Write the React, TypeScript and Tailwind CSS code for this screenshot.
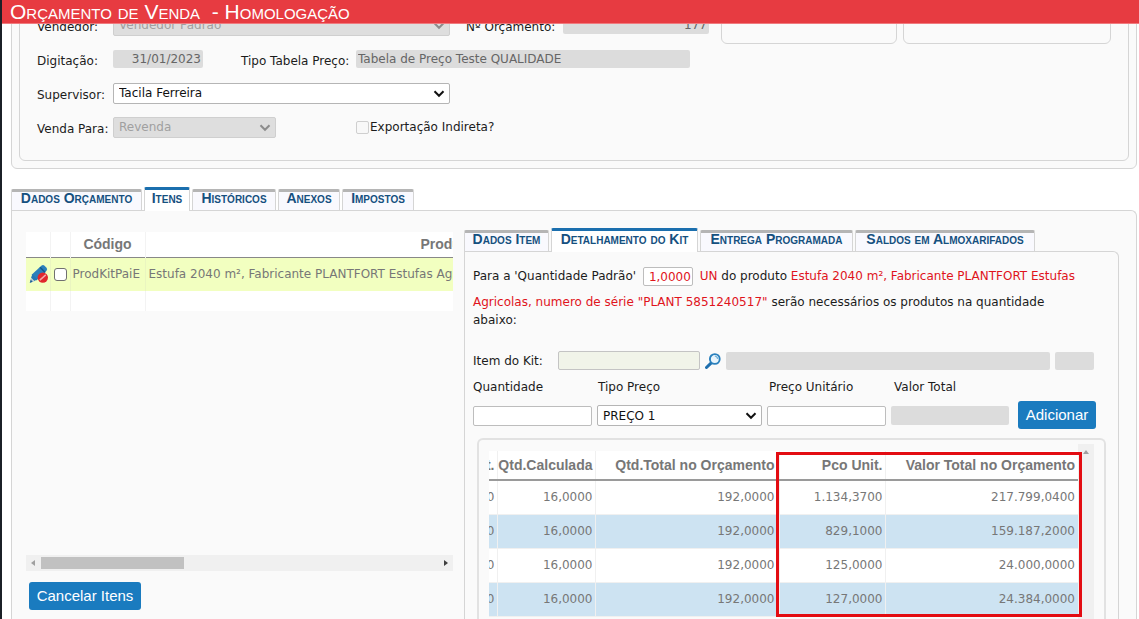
import type { ReactNode } from 'react';
import clsx from 'clsx';

interface Tab {
  label: string;
  width: string;
  active?: boolean;
}

const mainTabs: Tab[] = [
  { label: 'Dados Orçamento', width: 'w-[131px]' },
  { label: 'Itens', width: 'w-[46px]', active: true },
  { label: 'Históricos', width: 'w-[84px]' },
  { label: 'Anexos', width: 'w-[62px]' },
  { label: 'Impostos', width: 'w-[72px]' },
];

const itemTabs: Tab[] = [
  { label: 'Dados Item', width: 'w-[85px]' },
  { label: 'Detalhamento do Kit', width: 'w-[147px]', active: true },
  { label: 'Entrega Programada', width: 'w-[153px]' },
  { label: 'Saldos em Almoxarifados', width: 'w-[180px]' },
];

const kitRows = [
  { unit: '0', calc: '16,0000', total: '192,0000', price: '1.134,3700', value: '217.799,0400' },
  { unit: '0', calc: '16,0000', total: '192,0000', price: '829,1000', value: '159.187,2000' },
  { unit: '0', calc: '16,0000', total: '192,0000', price: '125,0000', value: '24.000,0000' },
  { unit: '0', calc: '16,0000', total: '192,0000', price: '127,0000', value: '24.384,0000' },
];

const field = 'block rounded-xs border border-[#bdbdbd] bg-white px-[5px] outline-none';
const readOnlyField = 'block rounded-xs bg-[#dcdcdc] px-[2px] text-[#666] outline-none';

function Tabs({ tabs }: { tabs: Tab[] }) {
  return (
    <div role="tablist" className="relative z-10 -mb-px flex items-end gap-[2px]">
      {tabs.map((tab) => (
        <button
          key={tab.label}
          type="button"
          role="tab"
          aria-selected={!!tab.active}
          className={clsx(
            "flex shrink-0 justify-center rounded-t-xs border-x border-t-[3px] font-['Liberation_Sans'] text-[14px] font-bold whitespace-nowrap text-[#15507f] [font-variant:small-caps]",
            tab.width,
            tab.active
              ? 'h-6 border-x-[#d5d5d5] border-t-[#1b6fae] bg-white leading-[16px]'
              : 'h-[22px] border-b border-x-[#d5d5d5] border-t-[#b5b5b5] border-b-[#d5d5d5] bg-[#f9f9fe] leading-[13px]'
          )}
        >
          {tab.label}
        </button>
      ))}
    </div>
  );
}

interface SelectProps {
  id: string;
  value: string;
  width: string;
  disabled?: boolean;
}

function Select({ id, value, width, disabled }: SelectProps) {
  return (
    <div className={clsx('relative', width)}>
      <select
        id={id}
        disabled={disabled}
        className={clsx(
          'block h-[21px] w-full appearance-none rounded-xs border px-[5px] opacity-100 outline-none',
          disabled ? 'border-[#cfcfcf] bg-[#dedede] text-[#a0a0a0]' : 'border-[#b5b5b5] bg-white text-[#111]'
        )}
      >
        <option>{value}</option>
      </select>
      <svg viewBox="0 0 12 8" className="pointer-events-none absolute top-[7px] right-[5px] h-2 w-3">
        <path d="M1.5 1.3 6 5.8l4.5-4.5" fill="none" stroke={disabled ? '#8c8c8c' : '#111'} strokeWidth="2" />
      </svg>
    </div>
  );
}

function Label({ id, width, children }: { id: string; width?: string; children: ReactNode }) {
  return (
    <label htmlFor={id} className={clsx('shrink-0 pt-[3px] whitespace-nowrap', width)}>
      {children}
    </label>
  );
}

function EditIcon() {
  return (
    <svg viewBox="0 0 20 20" className="h-5 w-5">
      <path d="M2.6 10.8 12.6 1.6q1.5-1.1 2.9.2l2 2q1.3 1.5 0 3L7.4 16.4z" fill="#2b7fbb" />
      <path d="m11 3.2 5.2 5.3" stroke="#12588e" strokeWidth="1.4" />
      <path d="m3.4 10.2 5 5.3-3.2 1.6-3.2-3.3z" fill="#2377b4" />
      <path d="m2 13.4 3.6 3.8-4.4 1.6z" fill="#b9c9d3" />
      <path d="m1.7 15.6 2 2.2-3 1.1z" fill="#1b6195" />
      <circle cx="13.8" cy="13.6" r="5.2" fill="#e0272c" />
      <path d="m10.8 16.1 6-5.2" stroke="#f3a9a6" strokeWidth="1.5" />
    </svg>
  );
}

function SearchIcon() {
  return (
    <svg viewBox="0 0 16 16" className="h-4 w-4">
      <path d="m1.5 14.5 5-4.8" stroke="#1f6fae" strokeWidth="3" strokeLinecap="round" />
      <circle cx="9.8" cy="6" r="4.9" fill="#eaf5fc" stroke="#2a80bd" strokeWidth="1.9" />
      <path d="M9.8 3.2a2.8 2.8 0 0 1 2.8 2.8" fill="none" stroke="#75b5dd" strokeWidth="1.3" />
    </svg>
  );
}

function ActionButton({ width, children }: { width: string; children: ReactNode }) {
  return (
    <button
      type="button"
      className={clsx(
        "h-7 shrink-0 rounded-[3px] bg-[#1a7bbf] font-['Liberation_Sans'] text-[15px] leading-6 whitespace-nowrap text-white",
        width
      )}
    >
      {children}
    </button>
  );
}

function BudgetForm() {
  return (
    <section className="rounded-md border border-[#d5d5d5] bg-[#fafafa] p-[7px]">
      <div className="flex justify-between rounded-md border border-[#d5d5d5] pr-[17px] pb-4 pl-[17px]">
        <div className="shrink-0">
          <div className="flex h-[34px] items-center">
            <Label id="vendedor" width="w-[76px]">Vendedor:</Label>
            <Select id="vendedor" value="Vendedor Padrão" width="w-[337px]" disabled />
            <Label id="numero" width="ml-4 w-[97px]">Nº Orçamento:</Label>
            <input id="numero" readOnly defaultValue="177" className={clsx(readOnlyField, 'h-[18px] w-[146px] text-right')} />
          </div>
          <div className="flex h-[34px] items-center">
            <Label id="digitacao" width="w-[76px]">Digitação:</Label>
            <input id="digitacao" readOnly defaultValue="31/01/2023" className={clsx(readOnlyField, 'h-[18px] w-[90px] text-right')} />
            <Label id="tabela" width="ml-[38px] w-[115px]">Tipo Tabela Preço:</Label>
            <input id="tabela" readOnly defaultValue="Tabela de Preço Teste QUALIDADE" className={clsx(readOnlyField, 'h-[18px] w-[334px]')} />
          </div>
          <div className="flex h-[34px] items-center">
            <Label id="supervisor" width="w-[76px]">Supervisor:</Label>
            <Select id="supervisor" value="Tacila Ferreira" width="w-[337px]" />
          </div>
          <div className="flex h-[34px] items-center">
            <Label id="venda" width="w-[76px]">Venda Para:</Label>
            <Select id="venda" value="Revenda" width="w-[163px]" disabled />
            <label className="ml-20 flex items-center gap-px">
              <input type="checkbox" disabled className="h-[13px] w-[13px] appearance-none rounded-xs border border-[#cfcfcf] bg-[#f8f8f8]" />
              Exportação Indireta?
            </label>
          </div>
        </div>
        <div className="flex h-9 gap-[6px]">
          <div className="w-44 rounded-b-md border border-[#d5d5d5]" />
          <div className="w-52 rounded-b-md border border-[#d5d5d5]" />
        </div>
      </div>
    </section>
  );
}

function ItemsGrid() {
  return (
    <div className="w-[427px] shrink-0 pt-[21px]">
      <div className="flex h-[339px] flex-col justify-between overflow-hidden">
        <div className="overflow-hidden">
          <table className="w-[723px] table-fixed border-collapse text-[#777]">
            <colgroup>
              <col className="w-6" />
              <col className="w-5" />
              <col className="w-[75px]" />
              <col />
            </colgroup>
            <thead>
              <tr className="h-[25px] border-b border-[#888] bg-white font-['Liberation_Sans'] text-[14px]">
                <th className="border-r border-r-[#f3f3f3]" />
                <th className="border-r border-r-[#f3f3f3]" />
                <th className="border-r border-r-[#f3f3f3]">Código</th>
                <th>Produto</th>
              </tr>
            </thead>
            <tbody>
              <tr className="h-[34px] bg-[#f2ffc0]">
                <td className="border-r border-r-[#eaf5c0] pl-[3px]">
                  <EditIcon />
                </td>
                <td className="border-r border-r-[#eaf5c0] pl-[3px]">
                  <input
                    type="checkbox"
                    aria-label="Selecionar ProdKitPaiE"
                    className="block h-[13px] w-[13px] appearance-none rounded-[3px] border border-[#707070] bg-white"
                  />
                </td>
                <td className="overflow-hidden border-r border-r-[#eaf5c0] pl-[2px] whitespace-nowrap">ProdKitPaiE</td>
                <td className="overflow-hidden pl-[3px] whitespace-nowrap">Estufa 2040 m², Fabricante PLANTFORT Estufas Agricolas</td>
              </tr>
              <tr className="h-5 bg-white">
                <td className="border-r border-[#f3f3f3]" />
                <td className="border-r border-[#f3f3f3]" />
                <td className="border-r border-[#f3f3f3]" />
                <td />
              </tr>
            </tbody>
          </table>
        </div>
        <div className="flex h-4 items-center bg-[#f0f0f0] px-[5px]">
          <svg viewBox="0 0 4 6" className="h-[6px] w-1">
            <path d="M4 0v6L0 3z" fill="#a0a0a0" />
          </svg>
          <div className="ml-[6px] h-3 w-[143px] bg-[#c1c1c1]" />
          <svg viewBox="0 0 4 6" className="ml-auto h-[6px] w-1">
            <path d="M0 0v6l4-3z" fill="#404040" />
          </svg>
        </div>
      </div>
      <div className="pt-[11px] pl-[3px]">
        <ActionButton width="w-[112px]">Cancelar Itens</ActionButton>
      </div>
    </div>
  );
}

function KitTable() {
  return (
    <div className="relative mr-3 ml-1 flex grow rounded-t-md border-2 border-b-0 border-[#e2e2e2] pt-[4px] pr-[10px] pl-[10px]">
      <div className="min-w-0 grow overflow-hidden pt-[7px]">
        <div className="flex justify-end">
          <table className="-ml-3 w-full min-w-[602px] table-fixed border-collapse text-right text-[#777]">
            <colgroup>
              <col className="w-[21px]" />
              <col className="w-[98px]" />
              <col className="w-[184px]" />
              <col className="w-[106px]" />
              <col />
            </colgroup>
            <thead>
              <tr className="h-[29px] border-b-2 border-[#9a9a9a] bg-white font-['Liberation_Sans'] text-[14px] whitespace-nowrap">
                <th className="border-r border-r-[#f0f0f0] pr-[2px]">t.</th>
                <th className="border-r border-r-[#f0f0f0] pr-[2px]">Qtd.Calculada</th>
                <th className="border-r border-r-[#f0f0f0] pr-[4px]">Qtd.Total no Orçamento</th>
                <th className="border-r border-r-[#f0f0f0] pr-[2px]">Pco Unit.</th>
                <th className="pr-[3px]">Valor Total no Orçamento</th>
              </tr>
            </thead>
            <tbody>
              {kitRows.map((row) => (
                <tr key={row.price} className="h-[34px] border-b border-[#f0f0f0] bg-white even:bg-[#cde3f2]">
                  <td className="border-r border-r-[#f0f0f0] pr-[2px]">{row.unit}</td>
                  <td className="border-r border-r-[#f0f0f0] pr-[2px]">{row.calc}</td>
                  <td className="border-r border-r-[#f0f0f0] pr-[4px]">{row.total}</td>
                  <td className="border-r border-r-[#f0f0f0] pr-[2px]">{row.price}</td>
                  <td className="pr-[3px]">{row.value}</td>
                </tr>
              ))}
            </tbody>
          </table>
        </div>
      </div>
      <div className="flex w-4 shrink-0 justify-center bg-[#f0f0f0] pt-[6px]">
        <svg viewBox="0 0 6 4" className="h-1 w-[6px]">
          <path d="M0 4h6L3 0z" fill="#a0a0a0" />
        </svg>
      </div>
      {/* price columns highlight */}
      <div className="absolute top-[12px] right-[22px] h-[165px] w-[306px] border-3 border-[#e30c12]" />
    </div>
  );
}

function KitDetails() {
  return (
    <div className="flex min-w-0 grow flex-col pt-[17px]">
      <Tabs tabs={itemTabs} />
      <div className="flex grow flex-col rounded-tr-md border border-b-0 border-[#d5d5d5] bg-[#fafafa] pl-2">
        <p className="pt-[8px] pr-10 leading-[18px]">
          Para a 'Quantidade Padrão'{' '}
          <input
            aria-label="Quantidade Padrão"
            defaultValue="1,0000"
            className="mx-[3px] my-[7px] inline-block h-[19px] w-[50px] rounded-xs border border-[#bdbdbd] bg-white px-px text-right align-middle text-[#e0141c] outline-none"
          />{' '}
          <span className="text-[#e0141c]">UN</span> do produto{' '}
          <span className="text-[#e0141c]">
            Estufa 2040 m², Fabricante PLANTFORT Estufas Agricolas, numero de série "PLANT 5851240517"
          </span>{' '}
          serão necessários os produtos na quantidade abaixo:
        </p>
        <div className="flex items-center pt-[22px] pr-6">
          <label htmlFor="item-kit" className="w-[85px] shrink-0">Item do Kit:</label>
          <input id="item-kit" className="block h-[19px] w-[142px] rounded-xs border border-[#c4c4c4] bg-[#f1f4e9] px-1 outline-none" />
          <button type="button" aria-label="Pesquisar item" className="mx-[5px] shrink-0">
            <SearchIcon />
          </button>
          <input readOnly aria-label="Descrição" className={clsx(readOnlyField, 'h-[18px] min-w-0 grow')} />
          <input readOnly aria-label="Unidade" className={clsx(readOnlyField, 'ml-[5px] h-[18px] w-[39px]')} />
        </div>
        <div className="flex gap-[5px] pt-[9px]">
          <div className="w-[119px]">
            <label htmlFor="quantidade" className="block h-[27px]">Quantidade</label>
            <input id="quantidade" className={clsx(field, 'h-5 w-full')} />
          </div>
          <div className="w-[165px]">
            <label htmlFor="tipo-preco" className="block h-[26px] pl-px">Tipo Preço</label>
            <Select id="tipo-preco" value="PREÇO 1" width="w-full" />
          </div>
          <div className="w-[119px]">
            <label htmlFor="preco" className="block h-[27px] pl-[2px]">Preço Unitário</label>
            <input id="preco" className={clsx(field, 'h-5 w-full')} />
          </div>
          <div className="w-[118px]">
            <label htmlFor="valor" className="block h-[27px] pl-[3px]">Valor Total</label>
            <input id="valor" readOnly className={clsx(readOnlyField, 'h-[19px] w-full')} />
          </div>
          <div className="pt-[22px] pl-1">
            <ActionButton width="w-[78px]">Adicionar</ActionButton>
          </div>
        </div>
        <div className="flex grow flex-col pt-[9px]">
          <KitTable />
        </div>
      </div>
    </div>
  );
}

export default function App() {
  return (
    <div className="flex h-screen flex-col overflow-hidden border-l-2 border-[#1b2027] bg-white font-['DejaVu_Sans',sans-serif] text-[12px] leading-4 text-[#1c1c1c]">
      <header className="z-20 h-6 shrink-0 border-b border-[#f07a7e] bg-[#e73b41] pl-2">
        <h1 className="font-['Liberation_Sans'] text-[21px] leading-[23px] whitespace-pre text-white [font-variant:small-caps]">
          {'Orçamento de Venda  - Homologação'}
        </h1>
      </header>
      <main className="-mt-[25px] flex min-h-0 grow flex-col pr-[2px] pl-[9px]">
        <BudgetForm />
        <div className="flex grow flex-col pt-[18px]">
          <Tabs tabs={mainTabs} />
          <div className="flex grow gap-[11px] rounded-tr-md border border-b-0 border-[#d5d5d5] bg-[#fafafa] pr-[17px] pl-[14px]">
            <ItemsGrid />
            <KitDetails />
          </div>
        </div>
      </main>
    </div>
  );
}
